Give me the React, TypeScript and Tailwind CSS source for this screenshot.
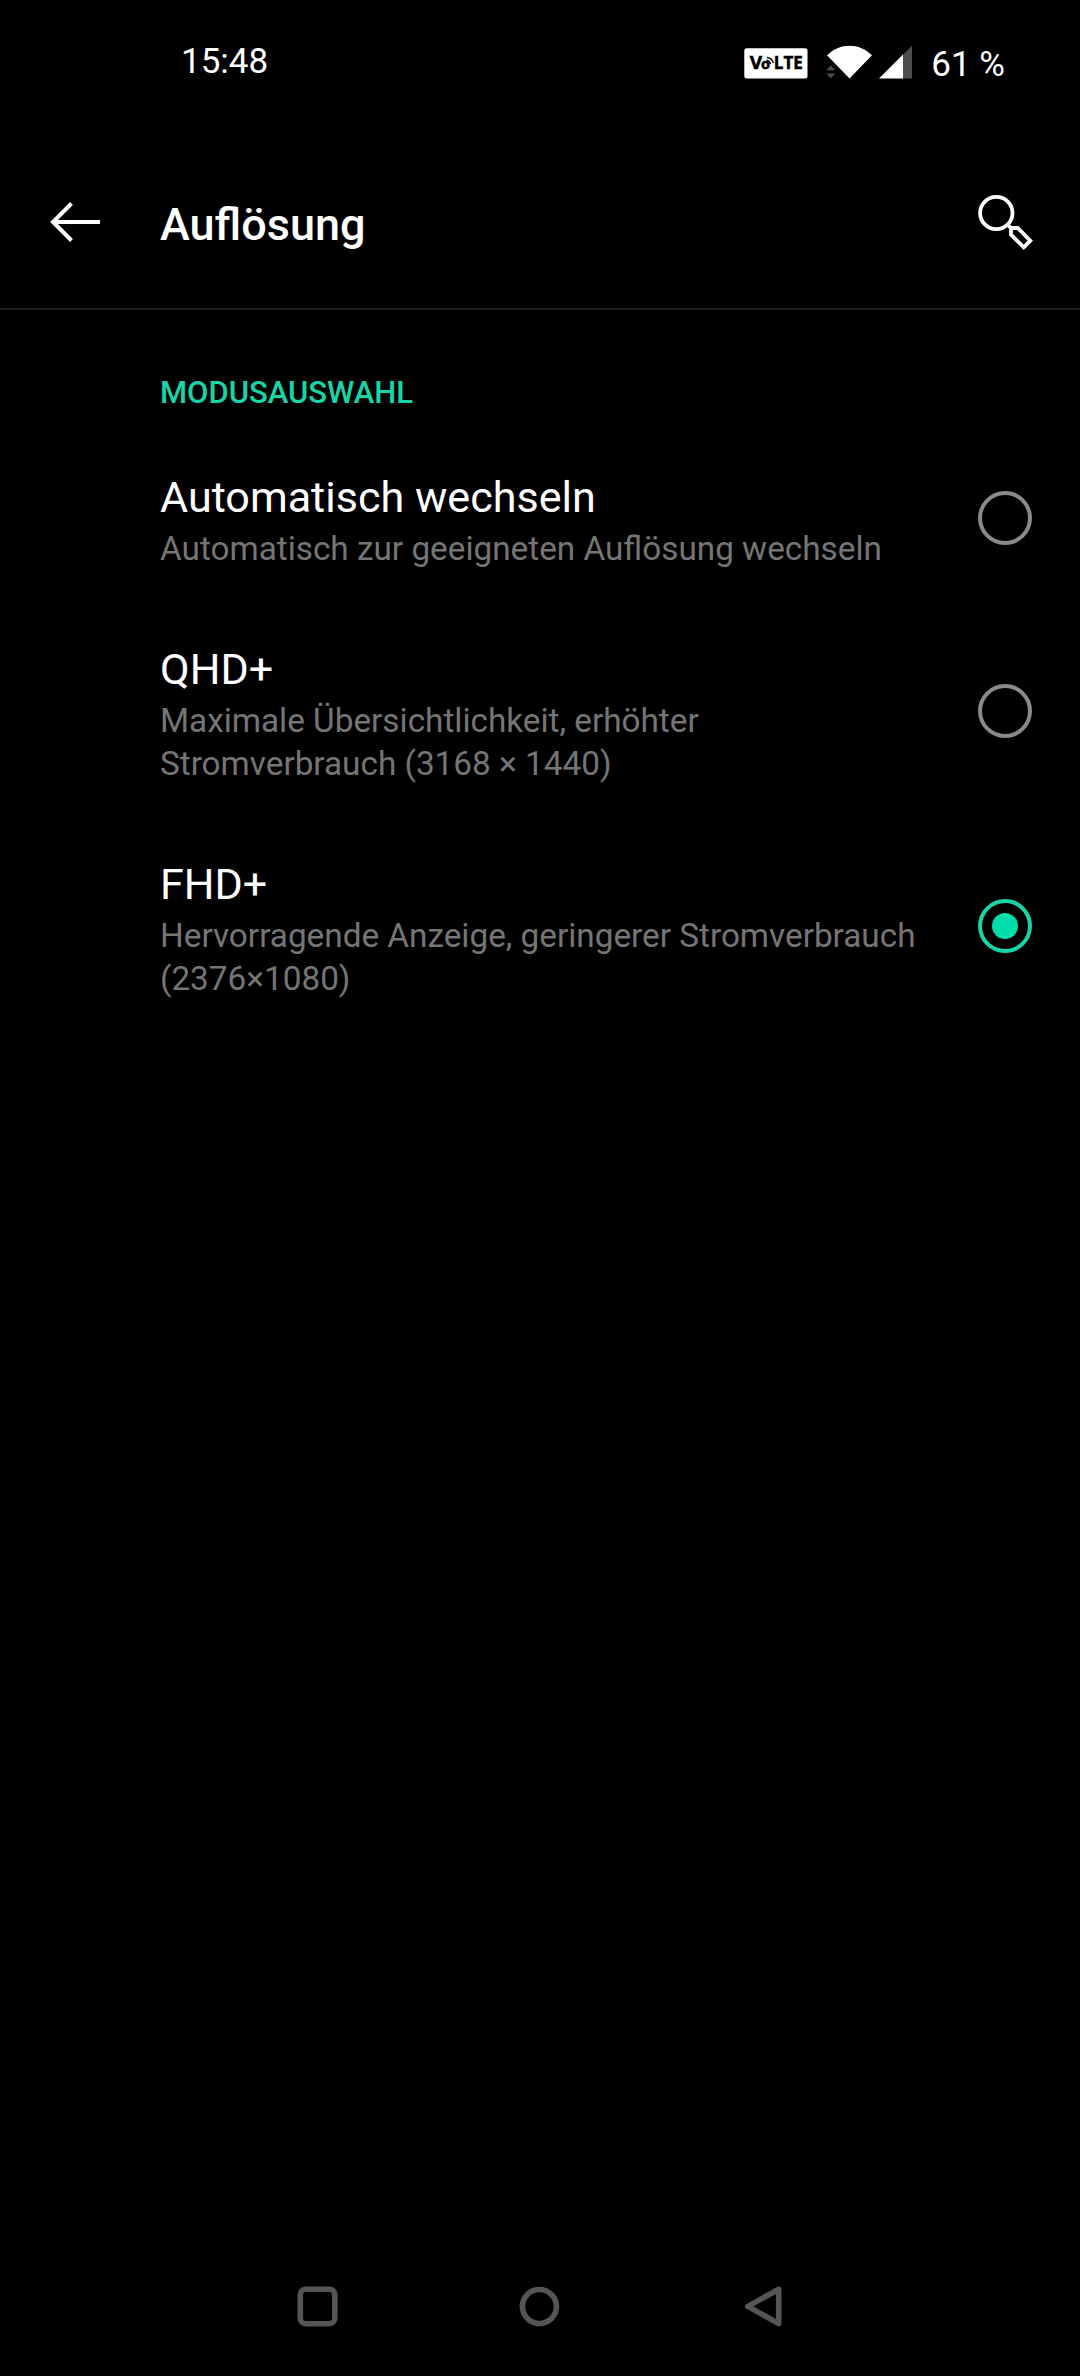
import { clsx } from "clsx"

interface ResolutionOption {
  id: string
  title: string
  summary: string
}

const options: ResolutionOption[] = [
  {
    id: "auto",
    title: "Automatisch wechseln",
    summary: "Automatisch zur geeigneten Auflösung wechseln",
  },
  {
    id: "qhd",
    title: "QHD+",
    summary: "Maximale Übersichtlichkeit, erhöhter\nStromverbrauch (3168 × 1440)",
  },
  {
    id: "fhd",
    title: "FHD+",
    summary: "Hervorragende Anzeige, geringerer Stromverbrauch\n(2376×1080)",
  },
]

function VolteBadge() {
  return (
    <svg width="64" height="31" viewBox="0 0 64 31">
      <rect x="0.3" y="0.2" width="63.2" height="30.4" rx="2.5" fill="#fff" />
      <g fontFamily="Open Sans, sans-serif" fontWeight="700" fill="#000" stroke="#000" strokeWidth="0.5">
        <text x="5.8" y="21.4" fontSize="17" textLength="12.5" lengthAdjust="spacingAndGlyphs">V</text>
        <text x="17" y="21.4" fontSize="14" textLength="9" lengthAdjust="spacingAndGlyphs">o</text>
        <text x="29.8" y="21.4" fontSize="17" textLength="29" lengthAdjust="spacingAndGlyphs">LTE</text>
      </g>
      <path d="M22.5 12.2a5 5 0 0 1 4 4M23 9.5a7.5 7.5 0 0 1 6.3 5.5" fill="none" stroke="#000" strokeWidth="1.4" />
    </svg>
  )
}

function WifiIcon() {
  return (
    <svg width="46" height="34" viewBox="0 0 46 34">
      <path d="M1 10.3C13.5-2.6 33.5-2.6 46 10.3L23.5 33.5Z" fill="#fff" />
      <path d="M.3 25.2 4.8 20.5 9.3 25.2ZM.3 28.5H9.3L4.8 33.3Z" fill="#4d4d4d" />
    </svg>
  )
}

function SignalIcon() {
  return (
    <svg width="34" height="34" viewBox="0 0 34 34">
      <path d="M24 9.5 33 .7V32Q33 33.5 31.5 33.5H24Z" fill="#4d4d4d" />
      <path d="M0 33.5 24 9.5V33.5Z" fill="#fff" />
    </svg>
  )
}

function StatusBar() {
  return (
    <div className="h-[124px] flex items-start justify-between pl-[181px] pr-[75px] text-[35px] leading-[41px]">
      <span className="pt-[41px]">15:48</span>
      <div className="flex items-start">
        <div className="pt-[48px]">
          <VolteBadge />
        </div>
        <div className="pt-[45px] pl-[18px]">
          <WifiIcon />
        </div>
        <div className="pt-[45px] pl-[7px]">
          <SignalIcon />
        </div>
        <span className="pt-[44px] pl-[18px]">61 %</span>
      </div>
    </div>
  )
}

function Header() {
  return (
    <header className="h-[186px] flex items-start border-b-2 border-[#1f1f1f]">
      <button className="pt-[78px] pl-[50px] w-[160px]">
        <svg width="51" height="40" viewBox="0 0 51 40" fill="none" stroke="#fff" strokeWidth="4">
          <path d="M50 20H3M21.5 1.5 3 20 21.5 38.5" />
        </svg>
      </button>
      <h1 className="flex-1 pt-[74px] text-[45px] leading-[53px] font-medium">Auflösung</h1>
      <button className="pt-[70px] pr-[46px]">
        <svg width="56" height="56" viewBox="0 0 56 56" fill="none" stroke="#fff" strokeWidth="3.8">
          <circle cx="18.3" cy="19" r="16.2" />
          <path d="M33 34H39.7L52.3 46.7 45.7 53.3 33 40.7Z" />
          <path d="M29.5 30.5 33 34" />
        </svg>
      </button>
    </header>
  )
}

function Radio({ checked }: { checked: boolean }) {
  return (
    <div
      className={clsx(
        "w-[54px] h-[54px] mb-px rounded-full border-4 flex items-center justify-center",
        checked ? "border-[#18d5a8]" : "border-[#8a8a8a]"
      )}
    >
      {checked && <div className="w-[26px] h-[26px] rounded-full bg-[#00dfab]" />}
    </div>
  )
}

function OptionRow({ option, checked }: { option: ResolutionOption; checked: boolean }) {
  return (
    <li className="flex items-center justify-between pl-[160px] pr-[48px]">
      <div className="pt-[38px] pb-[34px]">
        <div className="mb-px text-[43.1px] leading-[56px]">{option.title}</div>
        <div className="text-[33.3px] leading-[43px] text-[#757575] whitespace-pre">{option.summary}</div>
      </div>
      <Radio checked={checked} />
    </li>
  )
}

function NavigationBar() {
  return (
    <nav className="h-[138px] flex items-center pl-[297px]">
      <svg width="41" height="42" viewBox="0 0 41 42" fill="none" stroke="#555" strokeWidth="5.6">
        <rect x="3.3" y="3.2" width="34.5" height="34.5" rx="5.5" />
      </svg>
      <svg className="ml-[181px]" width="41" height="42" viewBox="0 0 41 42" fill="none" stroke="#555" strokeWidth="5.6">
        <circle cx="20.4" cy="20.5" r="17" />
      </svg>
      <svg className="ml-[184px]" width="38" height="42" viewBox="0 0 38 42" fill="none" stroke="#555" strokeWidth="5.6" strokeLinejoin="round">
        <path d="M34.7 3.2V37.6L3.8 20.4Z" />
      </svg>
    </nav>
  )
}

export default function App() {
  const selected = "fhd"

  return (
    <div className="w-[1080px] h-[2376px] bg-black text-white flex flex-col overflow-hidden font-[Roboto,sans-serif]">
      <StatusBar />
      <Header />
      <main className="flex-1">
        <h2 className="h-[122px] pt-[65px] pl-[160px] text-[31px] leading-[36px] font-medium text-[#18d5a8]">
          MODUSAUSWAHL
        </h2>
        <ul>
          {options.map((option) => (
            <OptionRow key={option.id} option={option} checked={option.id === selected} />
          ))}
        </ul>
      </main>
      <NavigationBar />
    </div>
  )
}
